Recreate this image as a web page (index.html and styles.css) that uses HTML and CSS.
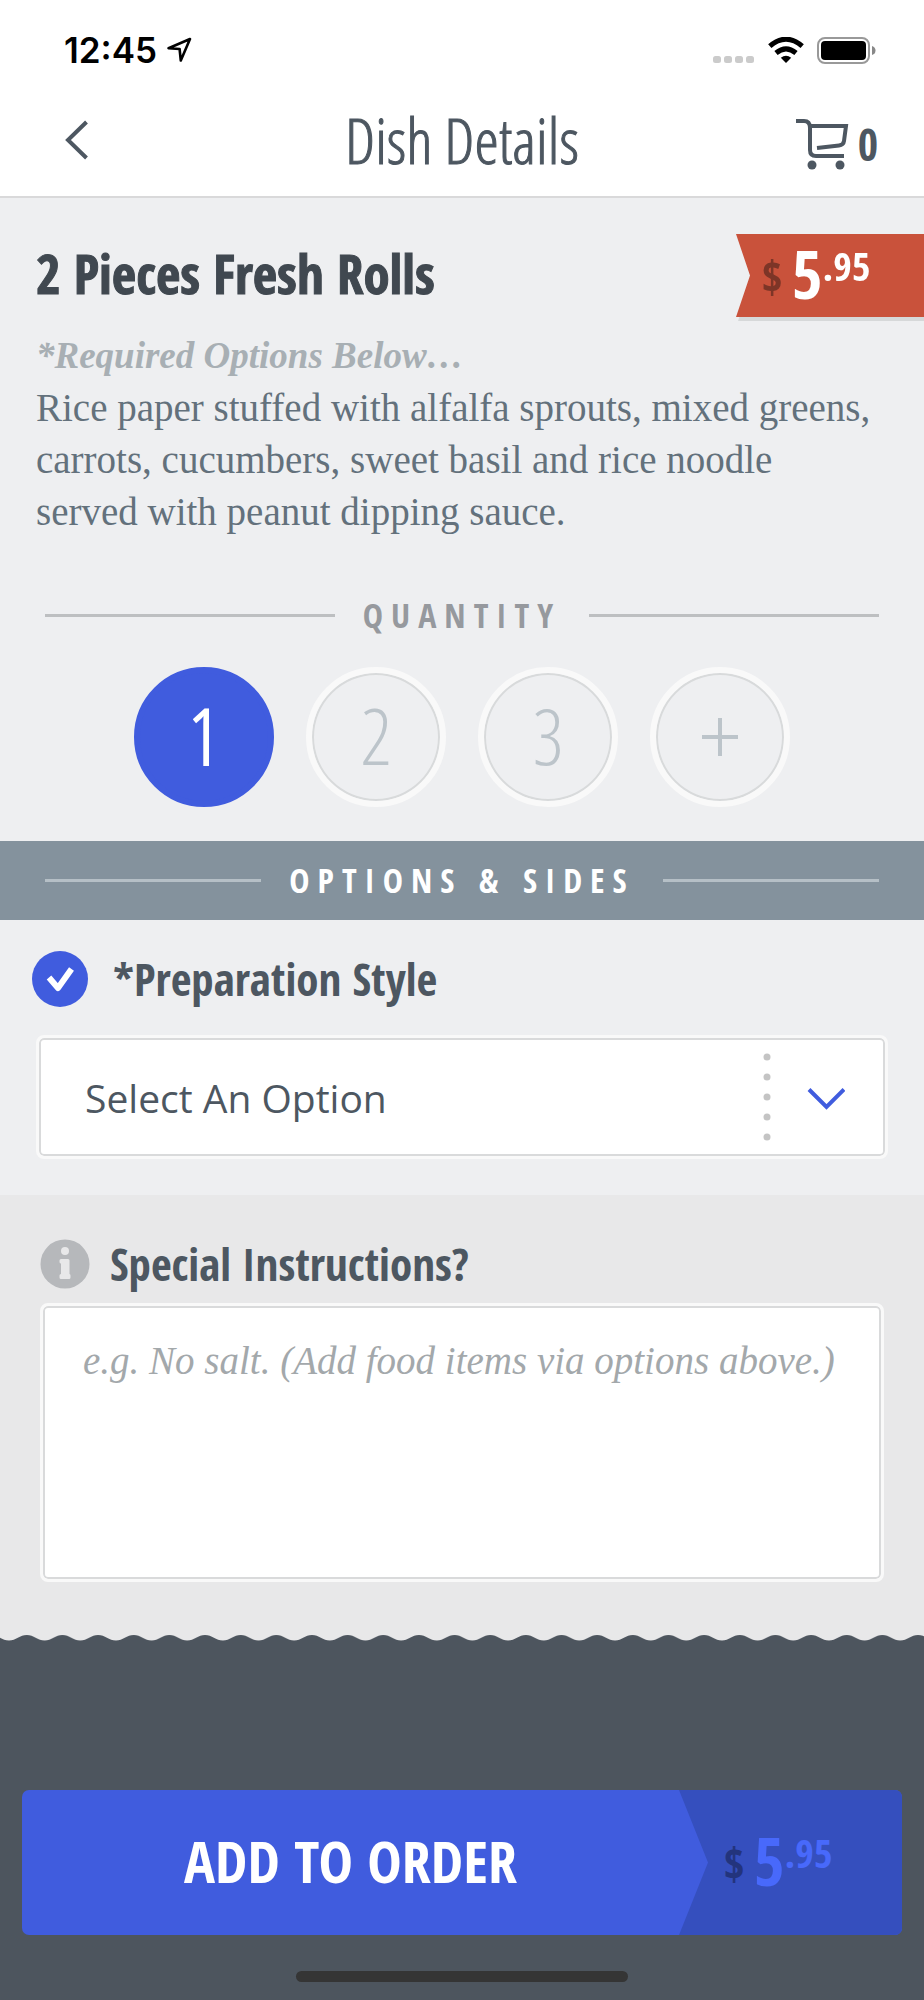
FILE: index.html
```html
<!DOCTYPE html>
<html lang="en">
<head>
<meta charset="utf-8">
<meta name="viewport" content="width=device-width, initial-scale=1">
<title>Dish Details</title>
<link rel="stylesheet" href="styles.css">
</head>
<body>
<div class="screen">
  <div class="status">
    <div class="status-left">
      <span class="clock">12:45</span>
      <svg width="26" height="26" viewBox="0 0 26 26" fill="none" stroke="#000" stroke-width="2.6" stroke-linejoin="round" aria-hidden="true"><path d="M2.500 11.200 24 2 14.800 23.500 13.600 12Z"/></svg>
    </div>
    <div class="status-right">
      <svg width="42" height="26" viewBox="0 0 42 26" fill="#cbcbcb" aria-hidden="true"><rect x="0" y="19" width="8" height="7" rx="2.500"/><rect x="11" y="19" width="8" height="7" rx="2.500"/><rect x="22" y="19" width="8" height="7" rx="2.500"/><rect x="33" y="19" width="8" height="7" rx="2.500"/></svg>
      <svg width="36" height="26" viewBox="0 0 36 26" aria-hidden="true"><path d="M1.800 9.200Q18-4.800 34.200 9.200M8 16Q18 7.600 28 16" fill="none" stroke="#000" stroke-width="5"/><path d="M18 26 12.800 20.800Q18 16.800 23.200 20.800Z"/></svg>
      <svg width="60" height="27" viewBox="0 0 60 27" aria-hidden="true"><rect x="1" y="1" width="51" height="25" rx="7" fill="none" stroke="#999" stroke-width="2"/><rect x="4" y="4" width="45" height="19" rx="4"/><path d="M55 9Q58.500 10 58.500 13.500T55 18Z" fill="#888"/></svg>
    </div>
  </div>

  <header class="header">
    <button class="back" type="button" aria-label="Back">
      <svg width="24" height="40" viewBox="0 0 24 40" fill="none" stroke="#4d5761" stroke-width="4"><path d="M22.500 2 4 20 22.500 38"/></svg>
    </button>
    <h1 class="header-title">Dish Details</h1>
    <button class="cart" type="button" aria-label="Cart, 0 items">
      <svg width="54" height="52" viewBox="0 0 54 52" fill="none" stroke="#4d5761" stroke-width="4"><path d="M0 3H8Q14 3 14 10V32Q14 38 20 38H48M14 8H50L48 23Q47.500 27 43 27.500L21 30"/><g fill="#4d5761" stroke="none"><circle cx="16" cy="47" r="4.500"/><circle cx="44" cy="47" r="4.500"/></g></svg>
      <span>0</span>
    </button>
  </header>

  <main>
    <section class="dish">
      <div class="dish-head">
        <h2 class="dish-name">2 Pieces Fresh Rolls</h2>
        <div class="ribbon">
          <div class="ribbon-body price"><span class="currency">$</span><span class="whole">5</span><span class="cents">.95</span></div>
        </div>
      </div>
      <p class="required">*Required Options Below…</p>
      <p class="description">Rice paper stuffed with alfalfa sprouts, mixed greens, carrots, cucumbers, sweet basil and rice noodle served with peanut dipping sauce.</p>
    </section>

    <fieldset class="quantity">
      <legend class="rule-title">Quantity</legend>
      <div class="choices">
        <label class="choice"><input type="radio" name="qty" checked><span>1</span></label>
        <label class="choice"><input type="radio" name="qty"><span>2</span></label>
        <label class="choice"><input type="radio" name="qty"><span>3</span></label>
        <button class="choice more" type="button" aria-label="More"><svg width="36" height="38" viewBox="0 0 36 38" stroke="#bcc4ca" stroke-width="4"><path d="M18 0V38M0 19H36"/></svg></button>
      </div>
    </fieldset>

    <h2 class="rule-title band">Options &amp; Sides</h2>

    <section class="option">
      <div class="option-head">
        <label class="tick"><input type="checkbox" checked aria-label="Preparation style required"><svg width="28" height="26" viewBox="0 0 28 26" fill="none" stroke="#fff" stroke-width="6" stroke-linejoin="round" aria-hidden="true"><path d="M3 11.500 12 22 25.500 3"/></svg></label>
        <label class="option-title" for="prep">*Preparation Style</label>
      </div>
      <div class="select-box">
        <select id="prep"><option>Select An Option</option></select>
        <svg class="select-mark" width="82" height="88" viewBox="0 0 82 88" aria-hidden="true"><g fill="#c4c4c4"><circle cx="4" cy="4" r="3.500"/><circle cx="4" cy="24" r="3.500"/><circle cx="4" cy="44" r="3.500"/><circle cx="4" cy="64" r="3.500"/><circle cx="4" cy="84" r="3.500"/></g><path d="M46 36.500 63.500 54 81 36.500" fill="none" stroke="#405cde" stroke-width="4"/></svg>
      </div>
    </section>

    <section class="notes">
      <div class="notes-head">
        <svg width="50" height="50" viewBox="0 0 50 50" aria-hidden="true"><circle cx="25" cy="25" r="24.500" fill="#b6b8bb"/><g fill="#e8e8e9"><circle cx="25" cy="12" r="4"/><path d="M21 20H28Q29.500 20 29.500 21.500V35Q30.500 35 30.500 36.500V38.500Q30.500 40 29 40H21Q19.500 40 19.500 38.500V36.500Q19.500 35 21 35V24.500Q19.500 24.500 19.500 23V21.500Q19.500 20 21 20Z"/></g></svg>
        <label class="option-title" for="notes">Special Instructions?</label>
      </div>
      <textarea id="notes" placeholder="e.g. No salt. (Add food items via options above.)"></textarea>
    </section>
  </main>

  <footer class="footer">
    <svg class="wave" width="100%" height="8" aria-hidden="true"><defs><pattern id="scallop" x="9" width="35.650" height="8" patternUnits="userSpaceOnUse"><rect width="36" height="8" fill="#e8e8e9"/><path d="M-1 6.600H0C7 6.600 10.800 1 17.800 1S28.600 6.600 35.700 6.600H37V9H-1Z" fill="#4d555e"/></pattern></defs><rect width="100%" height="8" fill="url(#scallop)"/></svg>
    <button class="add" type="button">
      <span class="add-label">ADD TO ORDER</span>
      <span class="add-price price"><span class="currency">$</span><span class="whole">5</span><span class="cents">.95</span></span>
    </button>
    <div class="home"></div>
  </footer>
</div>
</body>
</html>
```
FILE: styles.css
```css
:root {
  --narrow: "Open Sans Condensed", "Open Sans", sans-serif;
  --narrow-light: "Open Sans Condensed Light", "Open Sans Condensed", "Open Sans", sans-serif;
  --serif: "Liberation Serif", serif;
  --ink: #4d5761;
  --blue: #405cde;
  --paper: #eeeff1;
}

* { box-sizing: border-box; }

body {
  margin: 0;
  background: #4d555e;
  color: var(--ink);
  font-family: var(--narrow);
}

h1, h2, p { margin: 0; }
svg { display: block; flex: none; }

button {
  border: 0;
  padding: 0;
  background: none;
  color: inherit;
  font-family: inherit;
}

.screen {
  display: flex;
  flex-direction: column;
  min-height: 100vh;
}

.status {
  display: flex;
  align-items: center;
  justify-content: space-between;
  height: 100px;
  padding: 0 47px 0 64px;
  background: #fff;
  color: #000;
}

.status-left, .status-right { display: flex; align-items: center; }
.status-left { gap: 9px; }
.status-right { gap: 13px; }

.clock {
  font: 600 35px/40px Inter, sans-serif;
}

.header {
  display: grid;
  grid-template-columns: 1fr auto 1fr;
  align-items: center;
  height: 98px;
  padding: 0 46px 16px;
  border-bottom: 2px solid #d9d9da;
  background: #fff;
}

.back { justify-self: start; padding-left: 18px; }

.header-title {
  font-family: var(--narrow-light);
  font-size: 62px;
  line-height: 64px;
  font-weight: 300;
  -webkit-text-stroke: 1px currentColor;
}

.cart {
  display: flex;
  align-items: center;
  justify-self: end;
  gap: 8px;
  padding-top: 8px;
  font-size: 44px;
  line-height: 52px;
  font-weight: 700;
}

main { background: var(--paper); }

.dish { padding: 36px 46px 0 36px; }

.dish-head {
  display: flex;
  align-items: center;
  justify-content: space-between;
  height: 83px;
  margin: 0 -46px 13px 0;
}

.dish-name { color: #404850; font-size: 53px; line-height: 56px; padding-bottom: 4px; -webkit-text-stroke: 1px currentColor; }

.ribbon { width: 188px; filter: drop-shadow(2px 4px 0 #d6d8d9); }

.ribbon-body {
  height: 83px;
  padding-left: 26px;
  background: #c9523b;
  clip-path: polygon(0 0, 100% 0, 100% 100%, 0 100%, 14px 50%);
  color: #fff;
}

.price { display: flex; align-items: center; font-weight: 700; }
.price .currency { width: 30px; font-size: 44px; line-height: 52px; text-align: left; }
.price .whole { padding-bottom: 4px; font-size: 66px; line-height: 79px; }
.price .cents { padding-bottom: 20px; font-size: 40px; line-height: 52px; }
.ribbon .currency { color: #7d3527; }

.required, .description {
  font-family: var(--serif);
  line-height: 52px;
}

.required { color: #a8afb4; font-size: 37px; font-style: italic; font-weight: 700; }
.description { color: #63717c; font-size: 39px; }

.quantity {
  min-width: 0;
  margin: 0;
  padding: 0 0 34px;
  border: 0;
}

.rule-title {
  display: flex;
  align-items: center;
  gap: 28px;
  width: 100%;
  padding: 57px 45px 31px;
  color: #96999e;
  font-size: 34px;
  line-height: 41px;
  font-weight: 700;
  letter-spacing: 8px;
  text-transform: uppercase;
}

.rule-title::before, .rule-title::after {
  content: "";
  flex: 1;
  height: 3px;
  background: #bdbfc1;
}

.choices { display: flex; justify-content: center; gap: 32px; }

.choice { display: grid; place-items: center; width: 140px; height: 140px; }
.choice > * { grid-area: 1 / 1; }

.choice input, .more {
  width: 140px;
  height: 140px;
  margin: 0;
  appearance: none;
  border: 6px solid #f9f9f9;
  border-radius: 50%;
  box-shadow: inset 0 0 0 2px #d8dadb;
}

.choice input:checked { border-color: var(--blue); background: var(--blue); box-shadow: none; }

.choice span {
  padding-bottom: 4px;
  color: #bcc4ca;
  font-family: var(--narrow-light);
  font-size: 78px;
  line-height: 88px;
  font-weight: 300;
}

.choice input:checked + span { color: #fff; -webkit-text-stroke: 2px #fff; }

.band {
  padding: 19px 45px;
  background: #84929d;
  color: #fff;
}

.band::before, .band::after { background: #b5bfc6; }

.option { padding: 31px 36px 36px; }
.option-head, .notes-head { display: flex; align-items: center; }
.option-head { gap: 25px; margin-left: -4px; height: 56px; }

.tick { display: grid; place-items: center; }
.tick > * { grid-area: 1 / 1; }
.tick input {
  width: 56px;
  height: 56px;
  margin: 0;
  appearance: none;
  border-radius: 50%;
  background: var(--blue);
}

.option-title { font-size: 45px; line-height: 52px; font-weight: 700; }

.select-box { display: grid; align-items: center; margin-top: 28px; }
.select-box > * { grid-area: 1 / 1; }

select, textarea {
  width: 100%;
  margin: 0;
  appearance: none;
  border: 3px solid #f9f9f9;
  border-radius: 8px;
  outline: 0;
  background: #fff;
  box-shadow: inset 0 0 0 2px #d9dadb;
}

select {
  height: 124px;
  padding: 0 140px 0 46px;
  color: var(--ink);
  font-family: "Open Sans", sans-serif;
  font-size: 39px;
}

.select-mark { justify-self: end; margin-right: 43px; pointer-events: none; }

.notes { padding: 41px 40px 52px; background: #e8e8e9; }
.notes-head { gap: 20px; height: 56px; }

textarea {
  display: block;
  height: 279px;
  margin-top: 11px;
  padding: 29px 40px;
  resize: none;
  font: 39px/52px var(--serif);
}

textarea::placeholder { color: #a3a8ab; font-style: italic; opacity: 1; }

.footer {
  display: flex;
  flex: 1;
  flex-direction: column;
  align-items: center;
  justify-content: space-between;
  padding-bottom: 18px;
}

.add {
  display: flex;
  width: calc(100% - 44px);
  height: 145px;
  margin: auto 0 36px;
  overflow: hidden;
  border-radius: 7px;
  background: var(--blue);
}

.add-label {
  flex: 1;
  align-self: center;
  padding-bottom: 4px;
  color: #fff;
  font-size: 58px;
  line-height: 84px;
  font-weight: 700;
}

.add-price {
  width: 223px;
  height: 145px;
  padding-left: 45px;
  background: #354fbe;
  clip-path: polygon(0 0, 100% 0, 100% 100%, 0 100%, 29px 50%);
  color: #4869fb;
}

.add-price .currency { color: #23347d; }

.home { width: 36%; height: 11px; border-radius: 6px; background: #353535; }
```
